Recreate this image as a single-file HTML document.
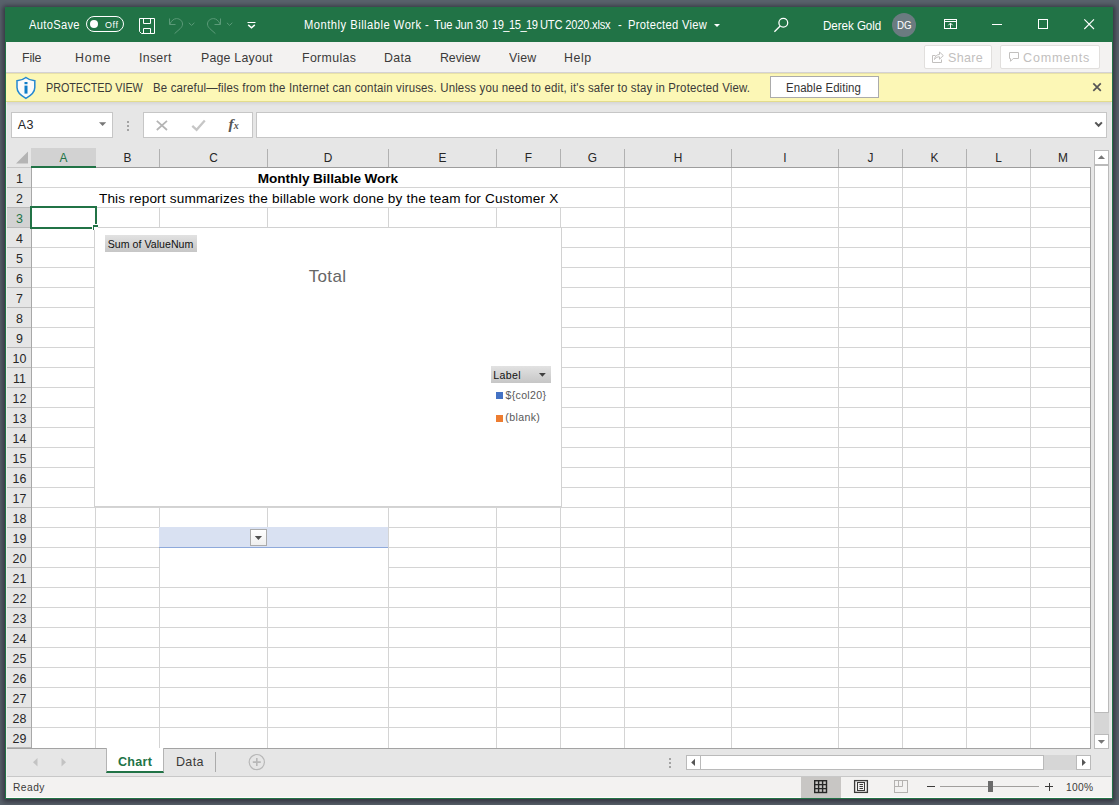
<!DOCTYPE html>
<html lang="en">
<head>
<meta charset="utf-8">
<title>Monthly Billable Work - Excel</title>
<style>
*{box-sizing:border-box;margin:0;padding:0}
html,body{width:1119px;height:805px;overflow:hidden}
body{background:#59626c;font-family:"Liberation Sans",sans-serif;font-size:13px;color:#262626;position:relative}
div,span,svg{position:absolute}
span{white-space:nowrap;line-height:1}
#win{left:5px;top:7px;width:1108px;height:792px;background:#e6e6e6;box-shadow:0 1px 5px 2px rgba(36,34,46,.72)}
.g{background:#217346}
.tt{color:#fff;font-size:12px;top:18.5px}
.mn{color:#3b3a39;font-size:13.3px;top:51px}
.box{background:#fff;border:1px solid #c6c6c6}
.vl{width:1px;background:#d4d4d4}
.hl{height:1px;background:#d4d4d4}
.ch{top:149px;height:18px;font-size:13.5px;color:#262626;text-align:center;line-height:18px;transform:scaleX(.88)}
.rh{left:7px;width:25px;height:19px;font-size:13.5px;color:#262626;text-align:center;line-height:21px;transform:scaleX(.92)}
.sb{background:#fff;border:1px solid #bababa}
</style>
</head>
<body>
<div id="win"></div>

<div class="g" style="left:5px;top:7px;width:1108px;height:35px"></div>
<span id="t_autosave" style="left:28.67px;top:19px;font-size:12px;color:#fff;letter-spacing:0.333px;transform:scaleX(0.93);transform-origin:0 0;">AutoSave</span>
<div style="left:86px;top:16px;width:38px;height:16px;border:1px solid #fff;border-radius:8px"></div>
<div style="left:90px;top:20px;width:8px;height:8px;border-radius:4px;background:#fff"></div>
<span id="t_off" style="left:105.27px;top:20.2px;font-size:9.6px;color:#fff;letter-spacing:0.67px;transform:scaleX(0.93);transform-origin:0 0;">Off</span>
<svg style="left:138px;top:17px" width="20" height="18" viewBox="138 17 20 18" fill="none" stroke="#fff" stroke-width="1">
<path d="M139.5 18.5H154.5V33.5H141.5L139.5 31.5Z"/><path d="M143.5 18.5V23.5H150.5V18.5"/><path d="M143.5 33.5V28.5H150.5V33.5"/></svg>
<svg style="left:166px;top:16px" width="70" height="20" viewBox="166 16 70 20" fill="none" stroke="#5b9a78" stroke-width="1">
<path d="M169.5 18.5V24.5H175.5"/><path d="M169.8 24.2C171.5 20.5 174 18.6 176.5 18.6C180 18.6 182.5 21 182.5 24C182.5 26 181.5 27.3 180.3 28.5L174.6 33.6"/>
<path d="M188.8 22.8L191.6 25.4L194.4 22.8"/>
<path d="M220.5 18.5V24.5H214.5"/><path d="M220.2 24.2C218.5 20.5 216 18.6 213.5 18.6C210 18.6 207.5 21 207.5 24C207.5 26 208.5 27.3 209.7 28.5L215.4 33.6"/>
<path d="M226.9 22.8L229.6 25.4L232.3 22.8"/>
</svg>
<svg style="left:246px;top:20px" width="12" height="10" viewBox="246 20 12 10" fill="none" stroke="#fff">
<path d="M247.5 22.5H255.5" stroke-width="1"/><path d="M248.2 24.9L251.5 27.7L254.8 24.9" stroke-width="1.5"/></svg>
<span id="t_title" style="left:0;top:0">
<span id="t_title1" style="left:304.38px;top:18.5px;font-size:12px;color:#fff;letter-spacing:0.542px;transform:scaleX(0.93);transform-origin:0 0;">Monthly Billable Work</span>
<span id="t_title2" style="left:425.3px;top:18.5px;font-size:12px;color:#fff;letter-spacing:0px;transform:scaleX(0.93);transform-origin:0 0;">-</span>
<span id="t_title3" style="left:434.01px;top:18.5px;font-size:12px;color:#fff;letter-spacing:-0.189px;transform:scaleX(0.93);transform-origin:0 0;">Tue Jun 30</span>
<span id="t_title4" style="left:491.64px;top:18.5px;font-size:12px;color:#fff;letter-spacing:-0.569px;transform:scaleX(0.93);transform-origin:0 0;">19_15_19</span>
<span id="t_title5" style="left:539.77px;top:18.5px;font-size:12px;color:#fff;letter-spacing:-0.227px;transform:scaleX(0.93);transform-origin:0 0;">UTC 2020.xlsx</span>
<span id="t_dash" style="left:617.5px;top:18.5px;font-size:12px;color:#fff;letter-spacing:0px;transform:scaleX(0.93);transform-origin:0 0;">-</span>
<span id="t_pv" style="left:627.93px;top:18.5px;font-size:12px;color:#fff;letter-spacing:0.328px;transform:scaleX(0.93);transform-origin:0 0;">Protected View</span>
</span>
<svg style="left:713px;top:23px" width="8" height="5" viewBox="0 0 8 5"><path d="M1 1H7L4 4Z" fill="#fff"/></svg>
<svg style="left:772px;top:16px" width="20" height="20" viewBox="772 16 20 20" fill="none" stroke="#fff" stroke-width="1.3">
<circle cx="783.3" cy="22.8" r="4.4"/><path d="M780.2 26L774.4 31.8"/></svg>
<span id="t_user" style="left:822.62px;top:19.5px;font-size:12.5px;color:#fff;letter-spacing:-0.065px;transform:scaleX(0.93);transform-origin:0 0;">Derek Gold</span>
<div style="left:892px;top:13px;width:24px;height:24px;border-radius:12px;background:#6b7b80"></div>
<span id="t_dg" style="left:896.6px;top:19.5px;font-size:10.5px;color:#fff;letter-spacing:0px;transform:scaleX(0.93);transform-origin:0 0;">DG</span>
<svg style="left:942px;top:17px" width="18" height="14" viewBox="942 17 18 14" fill="none" stroke="#fff" stroke-width="1">
<rect x="944.5" y="19.5" width="12" height="9"/><path d="M944.5 21.5H956.5"/><path d="M950.5 28.5V23.5M948.3 25.3L950.5 23.1L952.7 25.3"/></svg>
<svg style="left:990px;top:17px" width="110" height="14" viewBox="990 17 110 14" fill="none" stroke="#fff" stroke-width="1">
<path d="M992 24.5H1002"/><rect x="1038.5" y="19.5" width="9" height="9"/><path d="M1084.3 19.3L1094 29M1094 19.3L1084.3 29" stroke-width="1.1"/></svg>
<div style="left:6px;top:42px;width:1106px;height:31px;background:#f3f2f1;border-bottom:1px solid #d4d2d4"></div>
<span id="m_file" style="left:22.39px;top:51px;font-size:13.3px;color:#3b3a39;letter-spacing:-0.185px;transform:scaleX(0.93);transform-origin:0 0;">File</span>
<span id="m_home" style="left:74.79px;top:51px;font-size:13.3px;color:#3b3a39;letter-spacing:0.863px;transform:scaleX(0.93);transform-origin:0 0;">Home</span>
<span id="m_insert" style="left:138.78px;top:51px;font-size:13.3px;color:#3b3a39;letter-spacing:0.314px;transform:scaleX(0.93);transform-origin:0 0;">Insert</span>
<span id="m_pagelayout" style="left:201.19px;top:51px;font-size:13.3px;color:#3b3a39;letter-spacing:0.218px;transform:scaleX(0.93);transform-origin:0 0;">Page Layout</span>
<span id="m_formulas" style="left:301.99px;top:51px;font-size:13.3px;color:#3b3a39;letter-spacing:0.37px;transform:scaleX(0.93);transform-origin:0 0;">Formulas</span>
<span id="m_data" style="left:383.99px;top:51px;font-size:13.3px;color:#3b3a39;letter-spacing:0.385px;transform:scaleX(0.93);transform-origin:0 0;">Data</span>
<span id="m_review" style="left:440.39px;top:51px;font-size:13.3px;color:#3b3a39;letter-spacing:-0.069px;transform:scaleX(0.93);transform-origin:0 0;">Review</span>
<span id="m_view" style="left:508.6px;top:51px;font-size:13.3px;color:#3b3a39;letter-spacing:0.192px;transform:scaleX(0.93);transform-origin:0 0;">View</span>
<span id="m_help" style="left:563.99px;top:51px;font-size:13.3px;color:#3b3a39;letter-spacing:0.648px;transform:scaleX(0.93);transform-origin:0 0;">Help</span>
<div style="left:924px;top:45px;width:68px;height:24px;background:#fff;border:1px solid #e1dfdd;border-radius:2px"></div>
<div style="left:1000px;top:45px;width:100px;height:24px;background:#fff;border:1px solid #e1dfdd;border-radius:2px"></div>
<svg style="left:930px;top:50px" width="16" height="14" viewBox="930 50 16 14" fill="none" stroke="#c2c0be" stroke-width="1">
<path d="M935.5 55.5H932.5V62.5H941.5V59.5"/><path d="M934.5 59.5C935 56 937 54.5 939.5 54.5V52L943.3 55.6L939.5 59.2V56.8C937.5 56.7 936 57.5 934.5 59.5Z"/></svg>
<span id="m_share" style="left:947.62px;top:51px;font-size:13.5px;color:#c2c0be;letter-spacing:0.309px;transform:scaleX(0.93);transform-origin:0 0;">Share</span>
<svg style="left:1007px;top:51px" width="14" height="12" viewBox="1007 51 14 12" fill="none" stroke="#c2c0be" stroke-width="1">
<path d="M1009.5 52.5H1018.5V58.5H1013.2L1010.5 61.3V58.5H1009.5Z"/></svg>
<span id="m_comments" style="left:1023.46px;top:51px;font-size:13.5px;color:#c2c0be;letter-spacing:0.87px;transform:scaleX(0.93);transform-origin:0 0;">Comments</span>
<div style="left:6px;top:73px;width:1106px;height:29px;background:#fcf7b6;border-top:1px solid #e8e2a8;border-bottom:1px solid #e3dc8c"></div>
<div style="left:6px;top:102px;width:1106px;height:4px;background:linear-gradient(#d6d6d6,#e6e6e6)"></div>
<svg style="left:15px;top:76px" width="22" height="24" viewBox="15 76 22 24">
<path d="M25.9 77.5C23.5 79.5 20.5 80.5 17 80.8V87.5C17 92 20.3 95.3 25.9 98.3C31.5 95.3 34.8 92 34.8 87.5V80.8C31.3 80.5 28.3 79.5 25.9 77.5Z" fill="#fafafa" stroke="#2488d0" stroke-width="1.5"/>
<rect x="24.5" y="85.6" width="3" height="8" fill="#0f7dc8"/><rect x="24.5" y="82" width="3" height="2.2" fill="#0f7dc8"/></svg>
<span id="p_head" style="left:46.11px;top:81.7px;font-size:12px;color:#3b3a39;letter-spacing:-0.039px;transform:scaleX(0.9);transform-origin:0 0;">PROTECTED VIEW</span>
<span id="p_msg" style="left:152.59px;top:82px;font-size:12.3px;color:#3b3a39;letter-spacing:0.181px;transform:scaleX(0.93);transform-origin:0 0;">Be careful—files from the Internet can contain viruses. Unless you need to edit, it's safer to stay in Protected View.</span>
<div style="left:770px;top:76px;width:109px;height:22px;background:#fff;border:1px solid #ababab"></div>
<span id="p_btn" style="left:785.54px;top:82.2px;font-size:12.3px;color:#333;letter-spacing:0.097px;transform:scaleX(0.93);transform-origin:0 0;">Enable Editing</span>
<svg style="left:1091px;top:81px" width="12" height="12" viewBox="1091 81 12 12"><path d="M1093.3 83.3L1100.8 90.8M1100.8 83.3L1093.3 90.8" stroke="#555" stroke-width="1.7" fill="none"/></svg>
<div class="box" style="left:11px;top:112px;width:102px;height:26px"></div>
<span id="f_name" style="left:17.8px;top:119px;font-size:12.5px;color:#262626;letter-spacing:0.364px;">A3</span>
<svg style="left:98px;top:121px" width="10" height="6" viewBox="0 0 10 6"><path d="M1 1.3H8.2L4.6 5Z" fill="#777"/></svg>
<div style="left:127px;top:120.5px;width:2px;height:2px;background:#a3a3a3"></div>
<div style="left:127px;top:124.5px;width:2px;height:2px;background:#a3a3a3"></div>
<div style="left:127px;top:128.5px;width:2px;height:2px;background:#a3a3a3"></div>
<div class="box" style="left:143px;top:112px;width:110px;height:26px"></div>
<svg style="left:154px;top:118px" width="90" height="15" viewBox="154 118 90 15" fill="none">
<path d="M156.8 120.8L167 130M167 120.8L156.8 130" stroke="#b4b4b4" stroke-width="1.7"/><path d="M192.3 125.8L196.6 129.8L204.8 120.6" stroke="#c6c6c6" stroke-width="2.3"/></svg>
<span style="left:228.5px;top:116px;font-family:'Liberation Serif',serif;font-style:italic;font-weight:bold;font-size:15.5px;color:#555">f<span style="position:static;font-size:10px;font-weight:bold;letter-spacing:0">x</span></span>
<div class="box" style="left:256px;top:112px;width:851px;height:26px"></div>
<svg style="left:1093px;top:120px" width="12" height="9" viewBox="1093 120 12 9"><path d="M1095.3 122.4L1098.6 125.8L1101.9 122.4" fill="none" stroke="#555" stroke-width="2"/></svg>
<div style="left:31px;top:168px;width:1059px;height:580px;background:#fff"></div>
<svg style="left:12.3px;top:150.4px" width="18" height="15" viewBox="0 0 18 15"><path d="M16 1.5V13.5H4Z" fill="#b4b4b4"/></svg>
<div style="left:31px;top:148px;width:65px;height:19px;background:#d2d2d2"></div>
<span class="ch" style="left:32px;width:63px;color:#217346">A</span>
<span class="ch" style="left:96px;width:63px">B</span>
<span class="ch" style="left:160px;width:107px">C</span>
<span class="ch" style="left:268px;width:120px">D</span>
<span class="ch" style="left:389px;width:107px">E</span>
<span class="ch" style="left:497px;width:63px">F</span>
<span class="ch" style="left:561px;width:63px">G</span>
<span class="ch" style="left:625px;width:106px">H</span>
<span class="ch" style="left:732px;width:106px">I</span>
<span class="ch" style="left:839px;width:63px">J</span>
<span class="ch" style="left:903px;width:63px">K</span>
<span class="ch" style="left:967px;width:63px">L</span>
<span class="ch" style="left:1031px;width:64px">M</span>
<div style="left:159px;top:149px;width:1px;height:18px;background:#b1b1b1"></div>
<div style="left:267px;top:149px;width:1px;height:18px;background:#b1b1b1"></div>
<div style="left:388px;top:149px;width:1px;height:18px;background:#b1b1b1"></div>
<div style="left:496px;top:149px;width:1px;height:18px;background:#b1b1b1"></div>
<div style="left:560px;top:149px;width:1px;height:18px;background:#b1b1b1"></div>
<div style="left:624px;top:149px;width:1px;height:18px;background:#b1b1b1"></div>
<div style="left:731px;top:149px;width:1px;height:18px;background:#b1b1b1"></div>
<div style="left:838px;top:149px;width:1px;height:18px;background:#b1b1b1"></div>
<div style="left:902px;top:149px;width:1px;height:18px;background:#b1b1b1"></div>
<div style="left:966px;top:149px;width:1px;height:18px;background:#b1b1b1"></div>
<div style="left:1030px;top:149px;width:1px;height:18px;background:#b1b1b1"></div>
<div style="left:31px;top:167px;width:1059px;height:1px;background:#9d9d9d"></div>
<div style="left:6px;top:167px;width:25px;height:1px;background:#c6c6c6"></div>
<div style="left:31px;top:166px;width:65px;height:2px;background:#217346"></div>
<div style="left:6px;top:208px;width:25px;height:19px;background:#d2d2d2"></div>
<span class="rh" style="top:168px">1</span>
<div style="left:6px;top:187px;width:25px;height:1px;background:#b9b9b9"></div>
<span class="rh" style="top:188px">2</span>
<div style="left:6px;top:207px;width:25px;height:1px;background:#b9b9b9"></div>
<span class="rh" style="top:208px;color:#217346">3</span>
<div style="left:6px;top:227px;width:25px;height:1px;background:#b9b9b9"></div>
<span class="rh" style="top:228px">4</span>
<div style="left:6px;top:247px;width:25px;height:1px;background:#b9b9b9"></div>
<span class="rh" style="top:248px">5</span>
<div style="left:6px;top:267px;width:25px;height:1px;background:#b9b9b9"></div>
<span class="rh" style="top:268px">6</span>
<div style="left:6px;top:287px;width:25px;height:1px;background:#b9b9b9"></div>
<span class="rh" style="top:288px">7</span>
<div style="left:6px;top:307px;width:25px;height:1px;background:#b9b9b9"></div>
<span class="rh" style="top:308px">8</span>
<div style="left:6px;top:327px;width:25px;height:1px;background:#b9b9b9"></div>
<span class="rh" style="top:328px">9</span>
<div style="left:6px;top:347px;width:25px;height:1px;background:#b9b9b9"></div>
<span class="rh" style="top:348px">10</span>
<div style="left:6px;top:367px;width:25px;height:1px;background:#b9b9b9"></div>
<span class="rh" style="top:368px">11</span>
<div style="left:6px;top:387px;width:25px;height:1px;background:#b9b9b9"></div>
<span class="rh" style="top:388px">12</span>
<div style="left:6px;top:407px;width:25px;height:1px;background:#b9b9b9"></div>
<span class="rh" style="top:408px">13</span>
<div style="left:6px;top:427px;width:25px;height:1px;background:#b9b9b9"></div>
<span class="rh" style="top:428px">14</span>
<div style="left:6px;top:447px;width:25px;height:1px;background:#b9b9b9"></div>
<span class="rh" style="top:448px">15</span>
<div style="left:6px;top:467px;width:25px;height:1px;background:#b9b9b9"></div>
<span class="rh" style="top:468px">16</span>
<div style="left:6px;top:487px;width:25px;height:1px;background:#b9b9b9"></div>
<span class="rh" style="top:488px">17</span>
<div style="left:6px;top:507px;width:25px;height:1px;background:#b9b9b9"></div>
<span class="rh" style="top:508px">18</span>
<div style="left:6px;top:527px;width:25px;height:1px;background:#b9b9b9"></div>
<span class="rh" style="top:528px">19</span>
<div style="left:6px;top:547px;width:25px;height:1px;background:#b9b9b9"></div>
<span class="rh" style="top:548px">20</span>
<div style="left:6px;top:567px;width:25px;height:1px;background:#b9b9b9"></div>
<span class="rh" style="top:568px">21</span>
<div style="left:6px;top:587px;width:25px;height:1px;background:#b9b9b9"></div>
<span class="rh" style="top:588px">22</span>
<div style="left:6px;top:607px;width:25px;height:1px;background:#b9b9b9"></div>
<span class="rh" style="top:608px">23</span>
<div style="left:6px;top:627px;width:25px;height:1px;background:#b9b9b9"></div>
<span class="rh" style="top:628px">24</span>
<div style="left:6px;top:647px;width:25px;height:1px;background:#b9b9b9"></div>
<span class="rh" style="top:648px">25</span>
<div style="left:6px;top:667px;width:25px;height:1px;background:#b9b9b9"></div>
<span class="rh" style="top:668px">26</span>
<div style="left:6px;top:687px;width:25px;height:1px;background:#b9b9b9"></div>
<span class="rh" style="top:688px">27</span>
<div style="left:6px;top:707px;width:25px;height:1px;background:#b9b9b9"></div>
<span class="rh" style="top:708px">28</span>
<div style="left:6px;top:727px;width:25px;height:1px;background:#b9b9b9"></div>
<span class="rh" style="top:728px">29</span>
<div style="left:6px;top:747px;width:25px;height:1px;background:#b9b9b9"></div>
<div style="left:31px;top:168px;width:1px;height:580px;background:#a8a8a8"></div>
<div class="vl" style="left:95px;top:168px;height:580px"></div>
<div class="vl" style="left:159px;top:168px;height:580px"></div>
<div class="vl" style="left:267px;top:168px;height:580px"></div>
<div class="vl" style="left:388px;top:168px;height:580px"></div>
<div class="vl" style="left:496px;top:168px;height:580px"></div>
<div class="vl" style="left:560px;top:168px;height:580px"></div>
<div class="vl" style="left:624px;top:168px;height:580px"></div>
<div class="vl" style="left:731px;top:168px;height:580px"></div>
<div class="vl" style="left:838px;top:168px;height:580px"></div>
<div class="vl" style="left:902px;top:168px;height:580px"></div>
<div class="vl" style="left:966px;top:168px;height:580px"></div>
<div class="vl" style="left:1030px;top:168px;height:580px"></div>
<div class="hl" style="left:32px;top:187px;width:1058px"></div>
<div class="hl" style="left:32px;top:207px;width:1058px"></div>
<div class="hl" style="left:32px;top:227px;width:1058px"></div>
<div class="hl" style="left:32px;top:247px;width:1058px"></div>
<div class="hl" style="left:32px;top:267px;width:1058px"></div>
<div class="hl" style="left:32px;top:287px;width:1058px"></div>
<div class="hl" style="left:32px;top:307px;width:1058px"></div>
<div class="hl" style="left:32px;top:327px;width:1058px"></div>
<div class="hl" style="left:32px;top:347px;width:1058px"></div>
<div class="hl" style="left:32px;top:367px;width:1058px"></div>
<div class="hl" style="left:32px;top:387px;width:1058px"></div>
<div class="hl" style="left:32px;top:407px;width:1058px"></div>
<div class="hl" style="left:32px;top:427px;width:1058px"></div>
<div class="hl" style="left:32px;top:447px;width:1058px"></div>
<div class="hl" style="left:32px;top:467px;width:1058px"></div>
<div class="hl" style="left:32px;top:487px;width:1058px"></div>
<div class="hl" style="left:32px;top:507px;width:1058px"></div>
<div class="hl" style="left:32px;top:527px;width:1058px"></div>
<div class="hl" style="left:32px;top:547px;width:1058px"></div>
<div class="hl" style="left:32px;top:567px;width:1058px"></div>
<div class="hl" style="left:32px;top:587px;width:1058px"></div>
<div class="hl" style="left:32px;top:607px;width:1058px"></div>
<div class="hl" style="left:32px;top:627px;width:1058px"></div>
<div class="hl" style="left:32px;top:647px;width:1058px"></div>
<div class="hl" style="left:32px;top:667px;width:1058px"></div>
<div class="hl" style="left:32px;top:687px;width:1058px"></div>
<div class="hl" style="left:32px;top:707px;width:1058px"></div>
<div class="hl" style="left:32px;top:727px;width:1058px"></div>
<div style="left:1090px;top:167px;width:1px;height:582px;background:#a3a3a3"></div>
<div style="left:6px;top:748px;width:1085px;height:1px;background:#a3a3a3"></div>
<div style="left:32px;top:168px;width:592px;height:19px;background:#fff"></div>
<div style="left:32px;top:188px;width:592px;height:19px;background:#fff"></div>
<span id="c_a1" style="left:257.81px;top:172px;font-size:13.6px;color:#000;letter-spacing:-0.072px;font-weight:bold;">Monthly Billable Work</span>
<span id="c_a2" style="left:98.91px;top:192px;font-size:13.6px;color:#000;letter-spacing:0.171px;">This report summarizes the billable work done by the team for Customer X</span>
<div style="left:160px;top:548px;width:228px;height:39px;background:#fff"></div>
<div style="left:159px;top:527px;width:229px;height:21px;background:#d9e1f2;border-bottom:1px solid #8ea9db"></div>
<div style="left:250px;top:529px;width:17px;height:17px;background:linear-gradient(#fff,#efefef);border:1px solid #ababab"></div>
<svg style="left:254px;top:535px" width="9" height="6" viewBox="0 0 9 6"><path d="M0.8 1H8L4.4 5Z" fill="#505050"/></svg>
<div style="left:94px;top:227px;width:468px;height:280px;background:#fff;border:1px solid #d2d2d2"></div>
<div style="left:105px;top:235px;width:92px;height:17px;background:linear-gradient(#e2e2e2,#c6c6c6);"></div>
<span id="g_sum" style="left:107.71px;top:239px;font-size:10.6px;color:#111;letter-spacing:0.032px;">Sum of ValueNum</span>
<span id="g_total" style="left:308.69px;top:267.6px;font-size:17px;color:#666;letter-spacing:0.36px;">Total</span>
<div style="left:491px;top:366px;width:60px;height:17px;background:linear-gradient(#e2e2e2,#c6c6c6)"></div>
<span id="g_label" style="left:493.36px;top:369.5px;font-size:10.6px;color:#111;letter-spacing:0.328px;">Label</span>
<svg style="left:538px;top:372.3px" width="9" height="6" viewBox="0 0 9 6"><path d="M1 1H7.8L4.4 4.8Z" fill="#404040"/></svg>
<div style="left:496px;top:392px;width:7px;height:7px;background:#4472c4"></div>
<span id="g_col20" style="left:505.45px;top:390px;font-size:10.6px;color:#595959;letter-spacing:0.326px;">${col20}</span>
<div style="left:496px;top:415px;width:7px;height:7px;background:#ed7d31"></div>
<span id="g_blank" style="left:505.37px;top:412px;font-size:10.6px;color:#595959;letter-spacing:0.36px;">(blank)</span>
<div style="left:30px;top:206px;width:67px;height:23px;border:2px solid #217346"></div>
<div style="left:92px;top:224px;width:6px;height:6px;background:#fff"></div>
<div style="left:93px;top:225px;width:5px;height:2px;background:#217346"></div>
<div style="left:93px;top:225px;width:1.4px;height:5px;background:#217346"></div>
<div style="left:1094px;top:150px;width:15px;height:599px;background:#d6d6d6"></div>
<div class="sb" style="left:1094px;top:150px;width:15px;height:15px"></div>
<svg style="left:1097px;top:154px" width="9" height="6" viewBox="0 0 9 6"><path d="M0.8 5H8L4.4 1.2Z" fill="#777"/></svg>
<div class="sb" style="left:1094px;top:165px;width:15px;height:548px"></div>
<div class="sb" style="left:1094px;top:734px;width:15px;height:15px"></div>
<svg style="left:1097px;top:739px" width="9" height="6" viewBox="0 0 9 6"><path d="M0.8 1H8L4.4 4.8Z" fill="#777"/></svg>
<svg style="left:30px;top:755.5px" width="40" height="12" viewBox="30 756 40 12"><path d="M37.5 758V766.4L33 762.2Z" fill="#c3c3c3"/><path d="M61.5 758V766.4L66 762.2Z" fill="#c3c3c3"/></svg>
<div style="left:106px;top:748px;width:58px;height:25px;background:#fff;border-left:1px solid #b4b4b4;border-right:1px solid #b4b4b4;border-bottom:2px solid #217346"></div>
<span id="s_chart" style="left:117.6px;top:755px;font-size:13.5px;color:#217346;letter-spacing:0.281px;font-weight:bold;transform:scaleX(0.93);transform-origin:0 0;">Chart</span>
<span id="s_data" style="left:175.6px;top:755px;font-size:13.5px;color:#3b3a39;letter-spacing:0.33px;transform:scaleX(0.93);transform-origin:0 0;">Data</span>
<div style="left:215px;top:752px;width:1px;height:20px;background:#ababab"></div>
<svg style="left:247px;top:753px" width="20" height="20" viewBox="247 753 20 20" fill="none" stroke="#b8b8b8" stroke-width="1">
<circle cx="256.8" cy="762.1" r="7.6" stroke-width="1.2"/><path d="M252.8 762.1H260.8M256.8 758.1V766.1" stroke-width="1.6"/></svg>
<div style="left:669px;top:757.5px;width:2px;height:2px;background:#a3a3a3"></div>
<div style="left:669px;top:761.5px;width:2px;height:2px;background:#a3a3a3"></div>
<div style="left:669px;top:765.5px;width:2px;height:2px;background:#a3a3a3"></div>
<div style="left:686px;top:755px;width:405px;height:15px;background:#d6d6d6"></div>
<div class="sb" style="left:686px;top:755px;width:15px;height:15px"></div>
<svg style="left:690px;top:758px" width="6" height="9" viewBox="0 0 6 9"><path d="M5 0.8V8L1.2 4.4Z" fill="#555"/></svg>
<div class="sb" style="left:700px;top:755px;width:344px;height:15px"></div>
<div class="sb" style="left:1076px;top:755px;width:15px;height:15px"></div>
<svg style="left:1081px;top:758px" width="6" height="9" viewBox="0 0 6 9"><path d="M1 0.8V8L4.8 4.4Z" fill="#555"/></svg>
<div style="left:6px;top:776px;width:1106px;height:22px;background:#f3f2f1;border-top:1px solid #c8c8c8"></div>
<div style="left:801px;top:777px;width:40px;height:21px;background:#c8c6c4"></div>
<span id="b_ready" style="left:12.99px;top:782px;font-size:11px;color:#3b3a39;letter-spacing:0.505px;transform:scaleX(0.93);transform-origin:0 0;">Ready</span>
<svg style="left:812px;top:778px" width="18" height="17" viewBox="812 778 18 17" fill="none" stroke="#262626" stroke-width="1.4">
<rect x="814.7" y="780.7" width="11.8" height="11.8"/><path d="M818.6 780.5V792.5M822.6 780.5V792.5M814.5 784.6H826.5M814.5 788.6H826.5"/></svg>
<svg style="left:852px;top:778px" width="18" height="17" viewBox="852 778 18 17" fill="none" stroke="#3b3a39" stroke-width="1">
<rect x="854.6" y="780.6" width="12.8" height="11.8" stroke-width="1.3"/><rect x="857.5" y="782.5" width="7" height="8"/><path d="M859.5 784.5H863M859.5 786.5H863M859.5 788.5H863"/></svg>
<svg style="left:892px;top:778px" width="18" height="17" viewBox="892 778 18 17" fill="none" stroke="#b4b2b0" stroke-width="1">
<rect x="894.5" y="780.5" width="13" height="12"/><path d="M898.5 780.5V786.5M902.5 780.5V786.5M894.5 786.5H902.5"/></svg>
<div style="left:927px;top:786px;width:8px;height:1px;background:#3b3a39"></div>
<div style="left:940px;top:786px;width:99px;height:1px;background:#a19f9d"></div>
<div style="left:988px;top:781px;width:5px;height:11px;background:#6b6b6b"></div>
<div style="left:1045px;top:786px;width:8px;height:1px;background:#3b3a39"></div>
<div style="left:1048.5px;top:783px;width:1px;height:8px;background:#3b3a39"></div>
<span id="b_zoom" style="left:1066.34px;top:782px;font-size:11px;color:#3b3a39;letter-spacing:0.303px;transform:scaleX(0.93);transform-origin:0 0;">100%</span>
<div style="left:6px;top:102px;width:1px;height:696px;background:#eeeced"></div>
<div style="left:1111px;top:102px;width:1px;height:696px;background:#eeeced"></div>
<div style="left:6px;top:797px;width:795px;height:1px;background:#fdfbfb"></div>
<div style="left:841px;top:797px;width:271px;height:1px;background:#fdfbfb"></div>
<div class="g" style="left:5px;top:42px;width:1px;height:757px"></div>
<div class="g" style="left:1112px;top:42px;width:1px;height:757px"></div>
<div class="g" style="left:5px;top:798px;width:1108px;height:1px"></div>
</body></html>
